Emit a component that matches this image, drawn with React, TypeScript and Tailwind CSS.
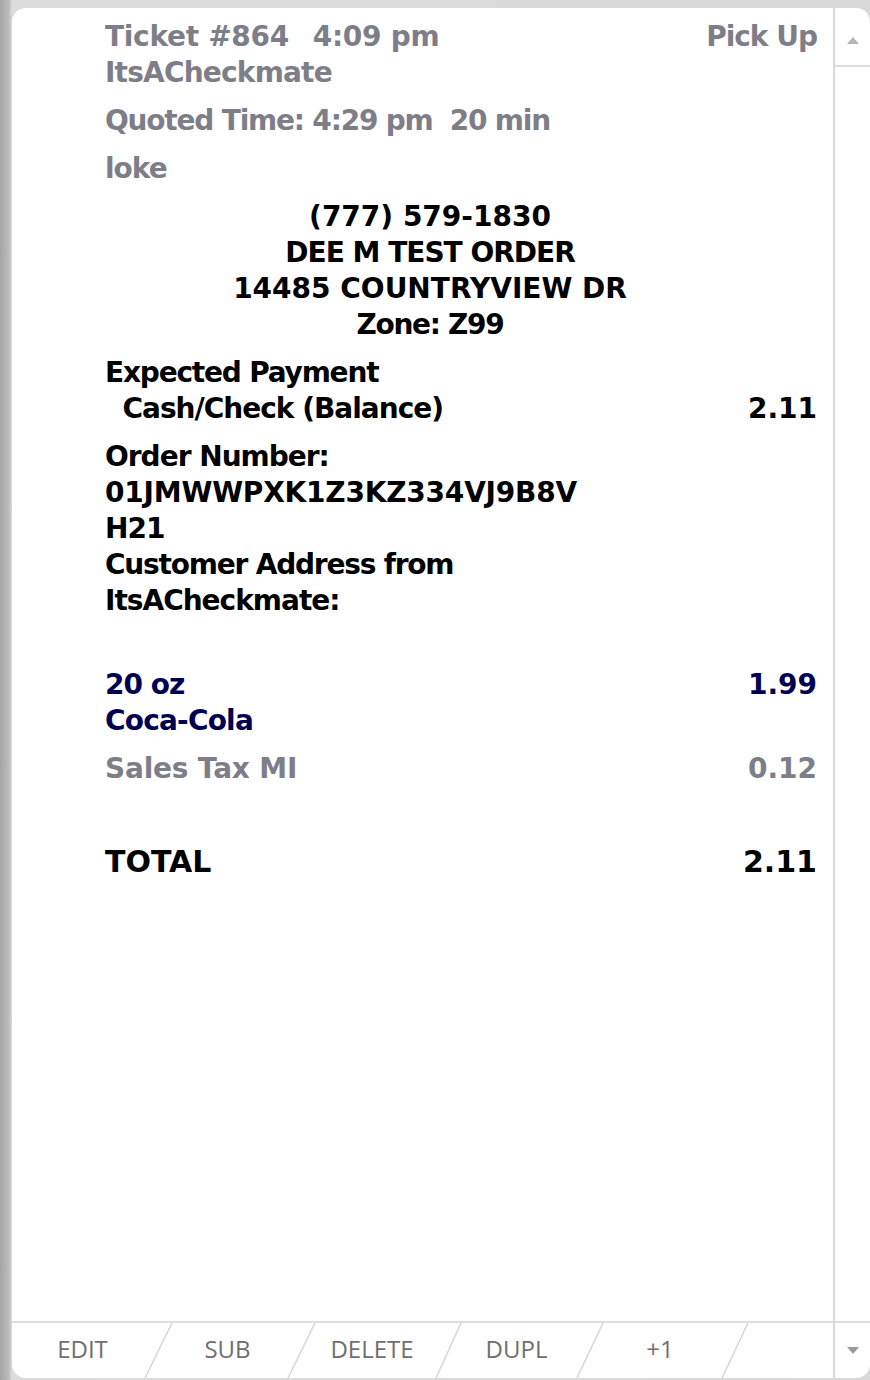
import React from 'react';

const grey = 'text-[#7e7e88]';
const navy = 'text-[#000052]';

function Line({ children, className = '' }: { children?: React.ReactNode; className?: string }) {
  return <div className={`h-[36px] leading-[36px] whitespace-pre ${className}`}>{children}</div>;
}

function Row({ left, right, className = '' }: { left: React.ReactNode; right?: React.ReactNode; className?: string }) {
  return (
    <div className={`flex justify-between h-[36px] leading-[36px] whitespace-pre ${className}`}>
      <span>{left}</span>
      {right && <span className="tracking-normal">{right}</span>}
    </div>
  );
}

const actions = [
  { label: 'EDIT', w: 'w-[147px]' },
  { label: 'SUB', w: 'w-[143px]' },
  { label: 'DELETE', w: 'w-[146px]' },
  { label: 'DUPL', w: 'w-[143px]' },
  { label: '+1', w: 'w-[144px]' },
];

export default function App() {
  return (
    <div className="w-[870px] h-[1380px] overflow-hidden bg-[linear-gradient(to_right,#a4a4a4,#bdbdbd_9px,#dcdcdc_12px,#d9d9d9)] pl-[12px] pt-[8px] pb-[2px]">
      <div className="h-full flex bg-white rounded-[14px] overflow-hidden font-['DejaVu_Sans',Verdana,sans-serif] font-bold text-[28px] text-black tracking-[-1px]">
        {/* Ticket body */}
        <div className="flex-1 flex flex-col">
          <div className="flex-1 pl-[93px] pr-[16px] pt-[11px]">
            <div className={grey}>
              <div className="flex justify-between h-[36px] leading-[36px] whitespace-pre">
                <span className="tracking-[-0.3px]">
                  Ticket #864<span className="tracking-[-1.8px]">   </span>4:09 pm
                </span>
                <span>Pick Up</span>
              </div>
              <Line className="tracking-[-0.8px]">ItsACheckmate</Line>
            </div>
            <Line className={`mt-[12px] ${grey} tracking-[-1.2px]`}>Quoted Time: 4:29 pm  20 min</Line>
            <Line className={`mt-[12px] ${grey}`}>loke</Line>

            <div className="mt-[12px] text-center pr-[62px]">
              <Line className="tracking-normal">(777) 579-1830</Line>
              <Line>DEE M TEST ORDER</Line>
              <Line className="tracking-normal">14485 COUNTRYVIEW DR</Line>
              <Line className="tracking-[-1.3px]">Zone: Z99</Line>
            </div>

            <div className="mt-[12px]">
              <Line className="tracking-[-1.2px]">Expected Payment</Line>
              <Row left="  Cash/Check (Balance)" right="2.11" />
            </div>

            <div className="mt-[12px]">
              <Line>Order Number:</Line>
              <Line className="tracking-[-0.2px]">01JMWWPXK1Z3KZ334VJ9B8V</Line>
              <Line>H21</Line>
              <Line className="tracking-[-1.2px]">Customer Address from</Line>
              <Line>ItsACheckmate:</Line>
              <Line />
            </div>

            <div className={`mt-[12px] ${navy}`}>
              <Row left="20 oz" right="1.99" />
              <Line className="tracking-[-0.8px]">Coca-Cola</Line>
            </div>

            <Row left="Sales Tax MI" right="0.12" className={`mt-[12px] ${grey} tracking-[-0.2px]`} />

            <div className="mt-[55px] flex justify-between text-[30px] h-[40px] leading-[40px] tracking-normal">
              <span>TOTAL</span>
              <span>2.11</span>
            </div>
          </div>

          {/* Action bar */}
          <div className="relative h-[57px] border-t-2 border-[#dedede] flex font-['Open_Sans',sans-serif] font-normal text-[24px] tracking-normal text-[#6f6f6f]">
            {actions.map((a) => (
              <div key={a.label} className={`${a.w} flex items-center justify-center pr-[6px] pb-[3px]`}>
                {a.label}
              </div>
            ))}
            <svg className="absolute inset-0 w-full h-full pointer-events-none" viewBox="0 0 821 55" preserveAspectRatio="none">
              {[
                [160, 133],
                [303, 276],
                [449, 424],
                [591, 565],
                [736, 710],
              ].map(([t, b]) => (
                <line key={t} x1={t} y1={0} x2={b} y2={55} stroke="#d6d6d6" strokeWidth="1.5" />
              ))}
            </svg>
          </div>
        </div>

        {/* Scroll column */}
        <div className="w-[37px] border-l-2 border-[#dadada] flex flex-col">
          <div className="h-[59px] border-b-2 border-[#dedede] flex items-center justify-center pt-[8px]">
            <svg width="12" height="7" viewBox="0 0 12 7">
              <path d="M0 7 L6 0 L12 7 Z" fill="#b4b4b4" />
            </svg>
          </div>
          <div className="flex-1" />
          <div className="h-[57px] border-t-2 border-[#dedede] flex items-center justify-center pl-[1px]">
            <svg width="12" height="7" viewBox="0 0 12 7">
              <path d="M0 0 L12 0 L6 7 Z" fill="#9a9a9a" />
            </svg>
          </div>
        </div>
      </div>
    </div>
  );
}
